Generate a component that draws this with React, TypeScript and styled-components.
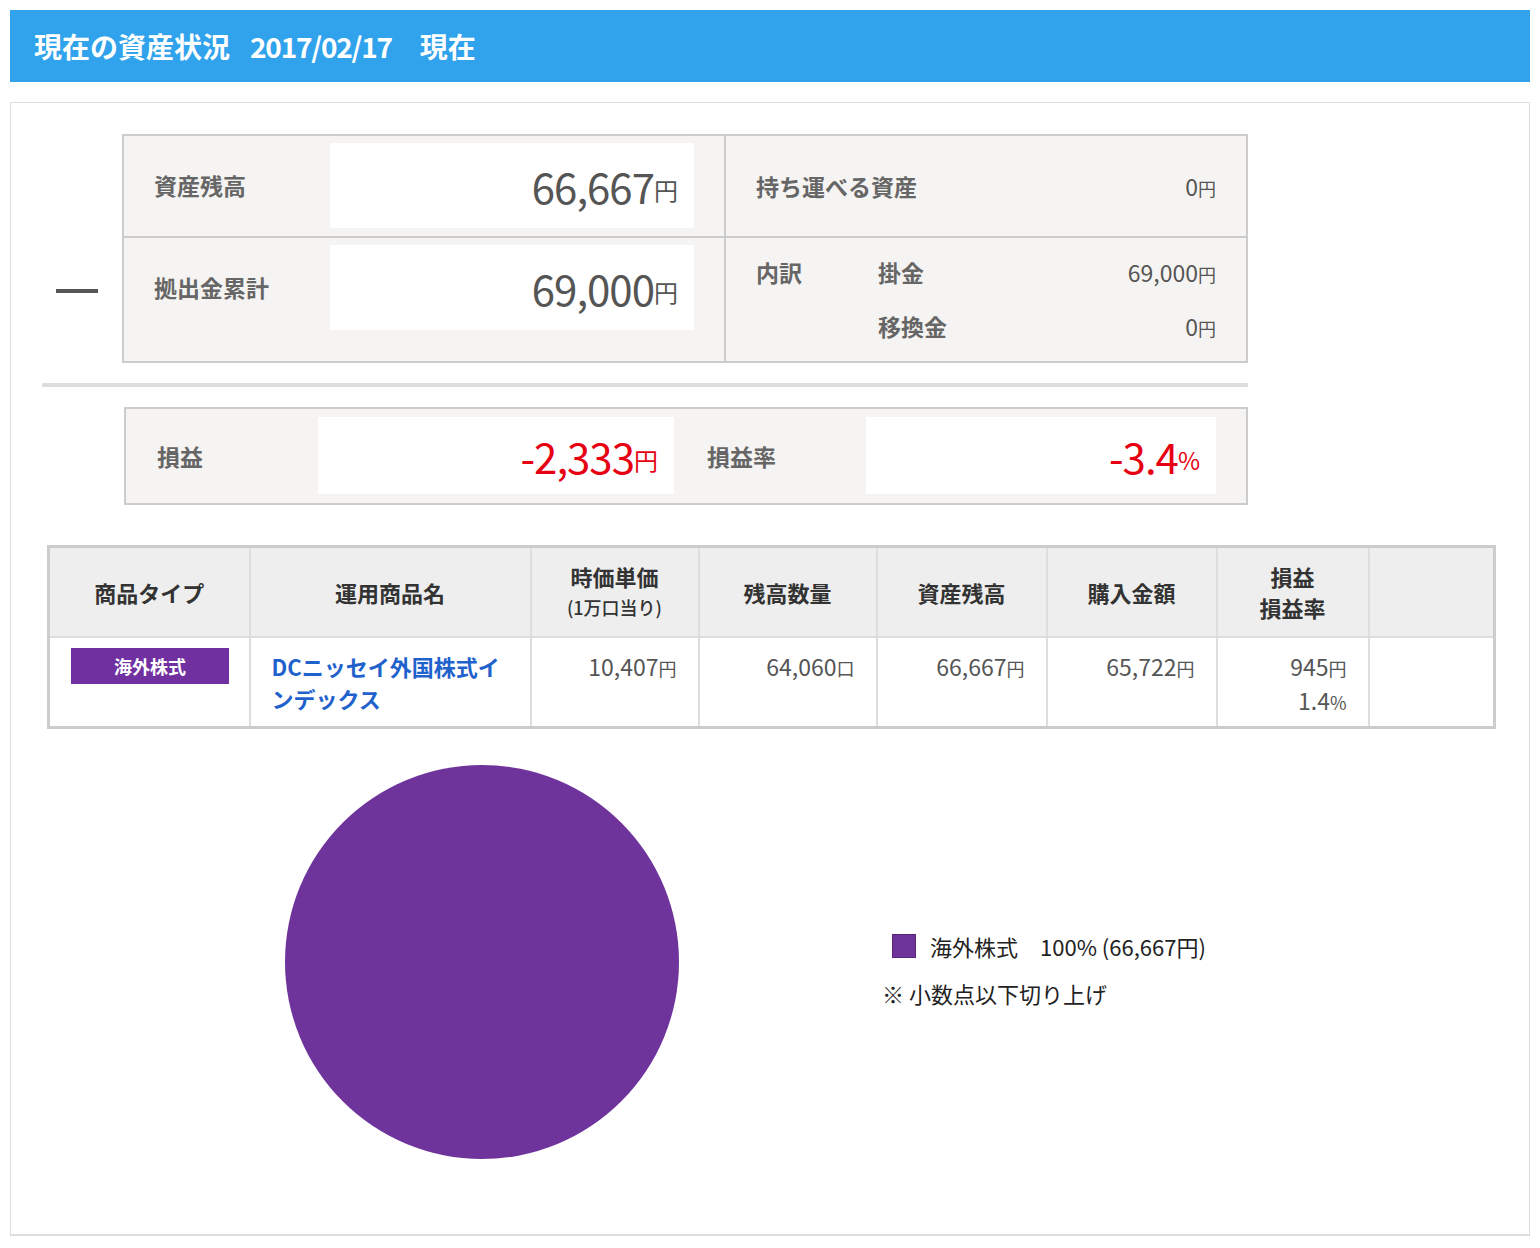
import styled, { createGlobalStyle } from 'styled-components';

const GlobalStyle = createGlobalStyle`
  body {
    margin: 10px;
    background: #fff;
    font-family: "Noto Sans CJK JP", "Liberation Sans", sans-serif;
  }
`;

const PURPLE = '#6f349b';

const TitleBar = styled.h1`
  display: flex;
  align-items: center;
  height: 72px;
  margin: 0;
  padding-left: 24px;
  background: #30a3ec;
  color: #fff;
  font-size: 28px;
  font-weight: bold;
`;

const TitleDate = styled.span`
  margin: 0 28px 0 20px;
  letter-spacing: -1.2px;
`;

const Panel = styled.section`
  margin-top: 20px;
  border: 1px solid #ddd;
  border-bottom-width: 2px;
  padding: 31px 31px 74px;
`;

const SummaryRow = styled.div`
  display: flex;
  align-items: flex-start;
`;

const Dash = styled.span`
  width: 42px;
  height: 4px;
  margin: 155px 24px 0 14px;
  background: #555;
`;

const SummaryBox = styled.div`
  display: grid;
  grid-template-columns: 602px 520px;
  border: 2px solid #ccc;
  background: #f5f4f2;
`;

const Cell = styled.div<{ $right?: boolean; $bottom?: boolean }>`
  display: flex;
  align-items: ${({ $right }) => ($right ? 'center' : 'flex-start')};
  padding: 7px 30px 8px;
  border-right: ${({ $right }) => ($right ? 'none' : '2px solid #ccc')};
  border-bottom: ${({ $bottom }) => ($bottom ? '2px solid #ccc' : 'none')};
`;

const Label = styled.div<{ $width?: number; $lh?: number }>`
  flex: 0 0 ${({ $width }) => $width ?? 176}px;
  color: #666;
  font-size: 23px;
  font-weight: bold;
  line-height: ${({ $lh }) => ($lh ? `${$lh}px` : 'normal')};
`;

const BigValue = styled.div<{ $w: number; $h: number; $red?: boolean }>`
  display: flex;
  align-items: center;
  justify-content: flex-end;
  width: ${({ $w }) => $w}px;
  height: ${({ $h }) => $h}px;
  padding-right: 16px;
  box-sizing: border-box;
  background: #fff;
  color: ${({ $red }) => ($red ? '#e60012' : '#555')};
  font-size: 42px;
  letter-spacing: -1px;

  small {
    font-size: 24px;
    margin-top: 8px;
    letter-spacing: 0;
  }
`;

const SmallValue = styled.div`
  display: flex;
  align-items: baseline;
  justify-content: flex-end;
  height: 54px;
  margin-left: auto;
  color: #555;
  font-size: 23px;
  line-height: 54px;

  small {
    font-size: 18px;
  }
`;

const Breakdown = styled.div`
  display: grid;
  grid-template-columns: 122px 1fr auto;
  grid-auto-rows: 54px;
  width: 100%;
  align-self: flex-start;
`;

const Separator = styled.hr`
  width: 1206px;
  height: 4px;
  margin: 20px 0 0;
  border: none;
  background: #ddd;
`;

const PnLBox = styled.div`
  display: flex;
  align-items: center;
  width: 1124px;
  box-sizing: border-box;
  margin: 20px 0 0 82px;
  padding: 8px 30px 9px 31px;
  border: 2px solid #ccc;
  background: #f5f4f2;
`;

const Table = styled.table`
  width: 1446px;
  margin: 40px 0 0 5px;
  border-collapse: collapse;
  table-layout: fixed;
  border: 3px solid #ccc;
`;

const Th = styled.th`
  height: 88px;
  padding: 0;
  border: 2px solid #ddd;
  background: #eee;
  color: #333;
  font-size: 22px;
  font-weight: bold;
  line-height: 31px;
  text-align: center;
  vertical-align: middle;

  small {
    display: block;
    font-size: 18px;
    font-weight: 500;
  }
`;

const Td = styled.td<{ $align?: 'left' | 'right' }>`
  height: 76px;
  padding: 12px 21px 0;
  border: 2px solid #ddd;
  color: #555;
  font-size: 23px;
  line-height: 32px;
  text-align: ${({ $align }) => $align ?? 'right'};
  vertical-align: top;

  small {
    font-size: 18px;
  }
`;

const Tag = styled.span`
  display: block;
  width: 158px;
  height: 36px;
  margin: -2px 0 0;
  background: #7030a0;
  color: #fff;
  font-size: 18px;
  font-weight: bold;
  line-height: 36px;
  text-align: center;
`;

const FundLink = styled.a`
  color: #1f62cc;
  font-size: 22px;
  font-weight: bold;
  text-decoration: none;
`;

const ChartArea = styled.div`
  display: flex;
  align-items: center;
  margin-top: 35px;
  padding-left: 242px;
`;

const Legend = styled.div`
  margin: 14px 0 0 202px;
  color: #222;
  font-size: 22px;
`;

const LegendItem = styled.div`
  display: flex;
  align-items: center;
  padding-left: 10px;
`;

const Swatch = styled.span`
  width: 22px;
  height: 22px;
  margin-right: 14px;
  background: ${PURPLE};
  border: 1px solid #55267a;
`;

const Note = styled.div`
  margin-top: 15px;
`;

const columns = [201, 281, 168, 178, 170, 170, 152, 126];

export default function App() {
  return (
    <>
      <GlobalStyle />
      <TitleBar>
        <span>現在の資産状況</span>
        <TitleDate>2017/02/17</TitleDate>
        <span>現在</span>
      </TitleBar>
      <Panel>
        <SummaryRow>
          <Dash />
          <SummaryBox>
            <Cell $bottom>
              <Label $lh={85}>資産残高</Label>
              <BigValue $w={364} $h={85}>
                66,667<small>円</small>
              </BigValue>
            </Cell>
            <Cell $right $bottom>
              <Label $width={200}>持ち運べる資産</Label>
              <SmallValue>
                0<small>円</small>
              </SmallValue>
            </Cell>
            <Cell>
              <Label $lh={85}>拠出金累計</Label>
              <BigValue $w={364} $h={85}>
                69,000<small>円</small>
              </BigValue>
            </Cell>
            <Cell $right>
              <Breakdown>
                <Label $lh={54}>内訳</Label>
                <Label $lh={54}>掛金</Label>
                <SmallValue>
                  69,000<small>円</small>
                </SmallValue>
                <span />
                <Label $lh={54}>移換金</Label>
                <SmallValue>
                  0<small>円</small>
                </SmallValue>
              </Breakdown>
            </Cell>
          </SummaryBox>
        </SummaryRow>
        <Separator />
        <PnLBox>
          <Label $width={161}>損益</Label>
          <BigValue $w={356} $h={77} $red>
            -2,333<small>円</small>
          </BigValue>
          <Label $width={159} style={{ marginLeft: 33 }}>
            損益率
          </Label>
          <BigValue $w={350} $h={77} $red>
            -3.4<small>%</small>
          </BigValue>
        </PnLBox>
        <Table>
          <colgroup>
            {columns.map((w, i) => (
              <col key={i} style={{ width: w }} />
            ))}
          </colgroup>
          <thead>
            <tr>
              <Th>商品タイプ</Th>
              <Th>運用商品名</Th>
              <Th>
                時価単価
                <small>(1万口当り)</small>
              </Th>
              <Th>残高数量</Th>
              <Th>資産残高</Th>
              <Th>購入金額</Th>
              <Th>
                損益
                <br />
                損益率
              </Th>
              <Th />
            </tr>
          </thead>
          <tbody>
            <tr>
              <Td $align="left">
                <Tag>海外株式</Tag>
              </Td>
              <Td $align="left">
                <FundLink href="#">DCニッセイ外国株式インデックス</FundLink>
              </Td>
              <Td>
                10,407<small>円</small>
              </Td>
              <Td>
                64,060<small>口</small>
              </Td>
              <Td>
                66,667<small>円</small>
              </Td>
              <Td>
                65,722<small>円</small>
              </Td>
              <Td>
                945<small>円</small>
                <br />
                1.4<small>%</small>
              </Td>
              <Td />
            </tr>
          </tbody>
        </Table>
        <ChartArea>
          <svg width="396" height="396" viewBox="0 0 396 396">
            <circle cx="198" cy="198" r="197" fill={PURPLE} />
          </svg>
          <Legend>
            <LegendItem>
              <Swatch />
              海外株式　100% (66,667円)
            </LegendItem>
            <Note>※ 小数点以下切り上げ</Note>
          </Legend>
        </ChartArea>
      </Panel>
    </>
  );
}
